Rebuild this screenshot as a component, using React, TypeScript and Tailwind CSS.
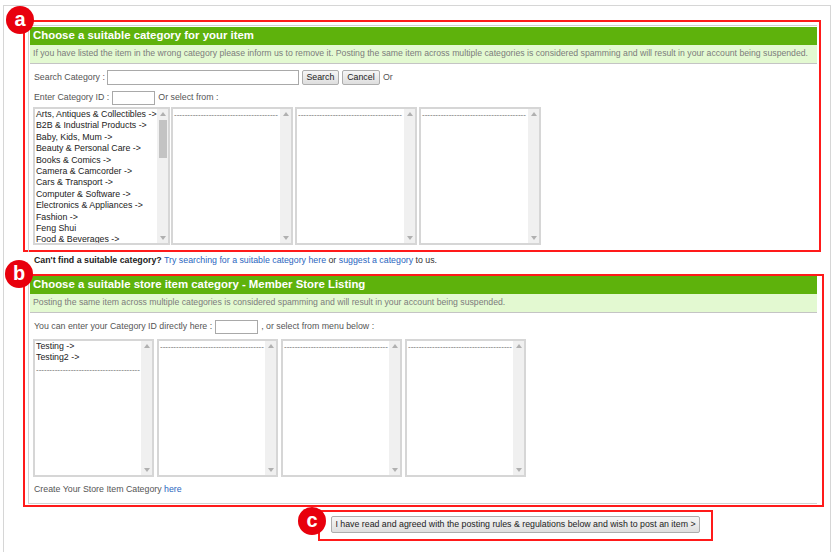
import React from 'react';

const FONT = { fontFamily: '"Liberation Sans", Arial, sans-serif' };
const DASHES = '-'.repeat(39);

const MAIN_CATEGORIES = [
  'Arts, Antiques & Collectibles ->',
  'B2B & Industrial Products ->',
  'Baby, Kids, Mum ->',
  'Beauty & Personal Care ->',
  'Books & Comics ->',
  'Camera & Camcorder ->',
  'Cars & Transport ->',
  'Computer & Software ->',
  'Electronics & Appliances ->',
  'Fashion ->',
  'Feng Shui',
  'Food & Beverages ->',
];

function Arrow({ up }: { up?: boolean }) {
  return (
    <svg width="6" height="4" viewBox="0 0 6 4" className="block">
      <path d={up ? 'M0 4 L3 0 L6 4 Z' : 'M0 0 L3 4 L6 0 Z'} fill="#b0b0b0" />
    </svg>
  );
}

function ListBox({
  width,
  height,
  items,
  thumb,
}: {
  width: string;
  height: string;
  items: string[];
  thumb?: boolean;
}) {
  return (
    <div className={`flex ${width} ${height} border-2 border-[#d6d6d6] bg-white`}>
      <div className="flex-1 overflow-hidden pl-[1px] text-[8.8px] leading-[11.4px] text-[#222]">
        {items.map((it, i) =>
          it === '--' ? (
            <div key={i} className="overflow-hidden whitespace-nowrap text-[8px] leading-[11.4px] text-[#666]">
              {DASHES}
            </div>
          ) : (
            <div key={i} className="whitespace-nowrap">
              {it}
            </div>
          )
        )}
      </div>
      <div className="flex w-[11px] flex-col items-center bg-[#f0f0f0] py-[3px]">
        <Arrow up />
        {thumb ? <div className="mt-[4px] h-[38px] w-[8px] bg-[#c3c3c3]" /> : null}
        <div className="flex-1" />
        <Arrow />
      </div>
    </div>
  );
}

function Badge({ letter, className }: { letter: string; className: string }) {
  return (
    <div
      className={`absolute flex h-[28px] w-[28px] items-center justify-center rounded-full bg-[#e8000d] text-[20px] font-bold leading-none text-white ${className}`}
    >
      <span className="-mt-[2px]">{letter}</span>
    </div>
  );
}

function Header({ title, note }: { title: string; note: string }) {
  return (
    <>
      <div className="flex h-[18px] items-center bg-[#5eb20c] pl-[3px] text-[11.4px] font-bold text-white">{title}</div>
      <div className="flex h-[19px] items-center whitespace-nowrap border-b border-[#c4c4c4] bg-[#e3f9d1] pl-[3px] text-[8.7px] text-[#7c7c7c]">
        {note}
      </div>
    </>
  );
}

function Btn({ children, className }: { children: React.ReactNode; className?: string }) {
  return (
    <button
      className={`flex h-[15px] items-center justify-center whitespace-nowrap rounded-[2px] border border-[#adadad] bg-gradient-to-b from-[#f6f6f6] to-[#dedede] text-[8.8px] leading-none text-[#222] ${className ?? ''}`}
    >
      {children}
    </button>
  );
}

export default function App() {
  return (
    <div className="relative h-[552px] w-[836px] overflow-hidden bg-white" style={FONT}>
      <div className="ml-[3px] mt-[5px] h-[560px] w-[828px] border border-b-0 border-[#d6d6d6] pl-[19px] pt-[14px]">
        {/* section a */}
        <div className="h-[232px] w-[798px] border-2 border-[#ff1a1a]">
          <div className="ml-[3px] mt-[3px] h-[227px] w-[789px] border-l border-t border-[#d2d2d2] pl-[1px] pt-[1px]">
            <Header
              title="Choose a suitable category for your item"
              note="If you have listed the item in the wrong category please inform us to remove it. Posting the same item across multiple categories is considered spamming and will result in your account being suspended."
            />
            <div className="mt-[6px] flex h-[15px] items-center pl-[4px] text-[8.8px] text-[#555]">
              <span>Search Category :</span>
              <div className="ml-[2px] h-[15px] w-[192px] border border-[#a9a9a9] bg-white" />
              <Btn className="ml-[3px] w-[37px]">Search</Btn>
              <Btn className="ml-[3px] w-[38px]">Cancel</Btn>
              <span className="ml-[3px]">Or</span>
            </div>
            <div className="mt-[6px] flex h-[14px] items-center pl-[4px] text-[8.8px] text-[#555]">
              <span>Enter Category ID :</span>
              <div className="ml-[3px] h-[14px] w-[43px] border border-[#a9a9a9] bg-white" />
              <span className="ml-[3px]">Or select from :</span>
            </div>
            <div className="mt-[2px] flex pl-[3px]">
              <ListBox width="w-[137px]" height="h-[138px]" items={MAIN_CATEGORIES} thumb />
              <div className="ml-[1px]">
                <ListBox width="w-[122px]" height="h-[138px]" items={['--']} />
              </div>
              <div className="ml-[2px]">
                <ListBox width="w-[122px]" height="h-[138px]" items={['--']} />
              </div>
              <div className="ml-[2px]">
                <ListBox width="w-[122px]" height="h-[138px]" items={['--']} />
              </div>
            </div>
          </div>
        </div>

        <div className="mt-[1px] h-[14px] pl-[11px] text-[8.8px] leading-[14px] text-[#333]">
          <span className="font-bold text-[#222]">Can't find a suitable category?</span>{' '}
          <a className="text-[#2a66c0]">Try searching for a suitable category here</a> or{' '}
          <a className="text-[#2a66c0]">suggest a category</a> to us.
        </div>

        {/* section b */}
        <div className="mt-[7px] h-[233px] w-[801px] border-2 border-[#ff1a1a]">
          <div className="ml-[3px] h-[228px] w-[789px] border-b border-l border-[#d2d2d2] pl-[1px]">
            <Header
              title="Choose a suitable store item category - Member Store Listing"
              note="Posting the same item across multiple categories is considered spamming and will result in your account being suspended."
            />
            <div className="mt-[7px] flex h-[14px] items-center pl-[4px] text-[8.8px] text-[#555]">
              <span>You can enter your Category ID directly here :</span>
              <div className="ml-[3px] h-[14px] w-[43px] border border-[#a9a9a9] bg-white" />
              <span className="ml-[3px]">, or select from menu below :</span>
            </div>
            <div className="mt-[5px] flex gap-[3px] pl-[3px]">
              <ListBox width="w-[121px]" height="h-[138px]" items={['Testing ->', 'Testing2 ->', '--']} />
              <ListBox width="w-[121px]" height="h-[138px]" items={['--']} />
              <ListBox width="w-[121px]" height="h-[138px]" items={['--']} />
              <ListBox width="w-[121px]" height="h-[138px]" items={['--']} />
            </div>
            <div className="mt-[5px] h-[14px] pl-[4px] text-[8.8px] leading-[14px] text-[#555]">
              Create Your Store Item Category <a className="text-[#2a66c0]">here</a>
            </div>
          </div>
        </div>

        {/* section c */}
        <div className="ml-[295px] mt-[3px] h-[31px] w-[395px] border-2 border-[#ff1a1a] pl-[11px] pt-[4px]">
          <Btn className="h-[17px] w-[369px]">
            I have read and agreed with the posting rules &amp; regulations below and wish to post an item &gt;
          </Btn>
        </div>
      </div>

      <Badge letter="a" className="left-[6px] top-[6px]" />
      <Badge letter="b" className="left-[5px] top-[260px]" />
      <Badge letter="c" className="left-[298px] top-[507px]" />
    </div>
  );
}
